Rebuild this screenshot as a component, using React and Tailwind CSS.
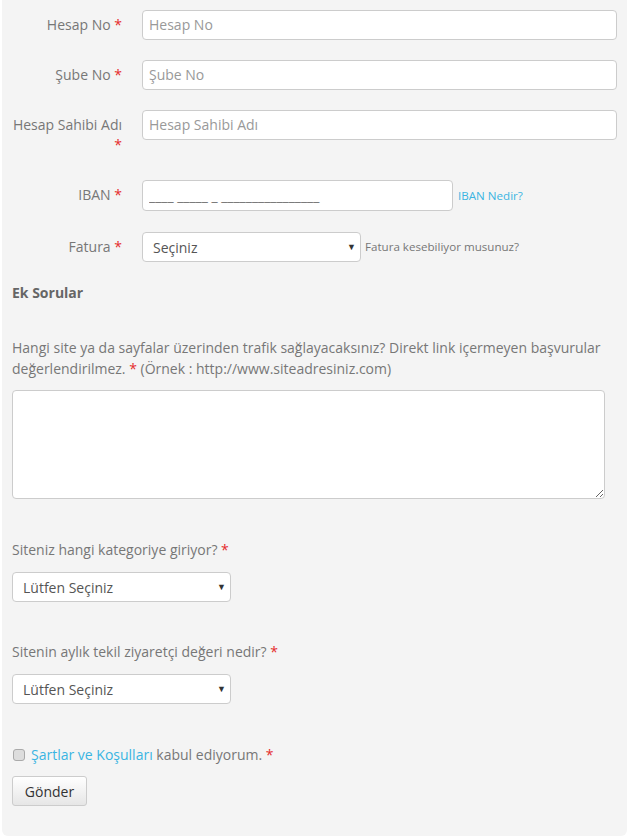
import React from 'react';

const Req = () => <span className="text-[#e52b2b]"> *</span>;

const Arrow = ({ right = 'right-[5px]' }) => (
    <span className={`pointer-events-none absolute top-1/2 -translate-y-1/2 text-[9px] text-[#333] ${right}`}>▼</span>
);

const Row = ({ label, children, className = '' }) => (
    <div className={`flex items-start ${className}`}>
        <label className="w-[110px] shrink-0 pt-[5px] text-right text-[14px] leading-[20px] text-[#777]">
            {label}
            <Req />
        </label>
        <div className="ml-[20px] flex flex-1 items-center">{children}</div>
    </div>
);

export default function App() {
    return (
        <div className="min-h-[837px] bg-white" style={{ fontFamily: '"Open Sans", "Liberation Sans", sans-serif' }}>
            <div className="ml-[2px] rounded-b-[6px] bg-[#f4f4f4] pb-[30px] pl-[10px] pr-[10px] pt-[10px]">
                <Row label="Hesap No">
                    <input placeholder="Hesap No" className="h-[30px] w-full rounded-[4px] border border-[#ccc] bg-white px-[6px] pb-[2px] text-[14px] text-[#555] outline-none placeholder:text-[#999]" />
                </Row>
                <Row label="Şube No" className="mt-[20px]">
                    <input placeholder="Şube No" className="h-[30px] w-full rounded-[4px] border border-[#ccc] bg-white px-[6px] pb-[2px] text-[14px] text-[#555] outline-none placeholder:text-[#999]" />
                </Row>
                <Row label="Hesap Sahibi Adı" className="mt-[20px]">
                    <input placeholder="Hesap Sahibi Adı" className="h-[30px] w-full rounded-[4px] border border-[#ccc] bg-white px-[6px] pb-[2px] text-[14px] text-[#555] outline-none placeholder:text-[#999]" />
                </Row>
                <Row label="IBAN" className="mt-[25px]">
                    <input placeholder="____ _____ _ ________________" className="h-[31px] w-[311px] rounded-[4px] border border-[#ccc] bg-white px-[6px] text-[14px] text-[#555] outline-none placeholder:text-[#777]" />
                    <a className="ml-[5px] text-[11.6px] text-[#3ab4e2]">IBAN Nedir?</a>
                </Row>
                <Row label="Fatura" className="mt-[21px]">
                    <div className="relative w-[219px]">
                        <select className="h-[30px] w-full appearance-none rounded-[4px] border border-[#ccc] bg-white pl-[10px] text-[14px] text-[#555] outline-none">
                            <option>Seçiniz</option>
                        </select>
                        <Arrow />
                    </div>
                    <span className="ml-[4px] text-[11.6px] text-[#777]">Fatura kesebiliyor musunuz?</span>
                </Row>

                <h4 className="mt-[21px] text-[14px] font-bold leading-[20px] text-[#666]">Ek Sorular</h4>

                <p className="mt-[34px] text-[14px] leading-[21px] text-[#777]">
                    Hangi site ya da sayfalar üzerinden trafik sağlayacaksınız? Direkt link içermeyen başvurular değerlendirilmez.
                    <Req /> (Örnek : http://www.siteadresiniz.com)
                </p>
                <textarea className="mt-[11px] block h-[109px] w-[593px] rounded-[4px] border border-[#ccc] bg-white outline-none" />

                <p className="mt-[41px] text-[14px] leading-[20px] text-[#777]">
                    Siteniz hangi kategoriye giriyor?<Req />
                </p>
                <div className="relative mt-[12px] w-[219px]">
                    <select className="h-[30px] w-full appearance-none rounded-[4px] border border-[#ccc] bg-white pl-[10px] text-[14px] text-[#555] outline-none">
                        <option>Lütfen Seçiniz</option>
                    </select>
                    <Arrow />
                </div>

                <p className="mt-[40px] text-[14px] leading-[20px] text-[#777]">
                    Sitenin aylık tekil ziyaretçi değeri nedir?<Req />
                </p>
                <div className="relative mt-[12px] w-[219px]">
                    <select className="h-[30px] w-full appearance-none rounded-[4px] border border-[#ccc] bg-white pl-[10px] text-[14px] text-[#555] outline-none">
                        <option>Lütfen Seçiniz</option>
                    </select>
                    <Arrow />
                </div>

                <div className="mt-[41px] flex items-center text-[14px] leading-[20px] text-[#777]">
                    <span className="ml-[1px] inline-block h-[12px] w-[12px] rounded-[3px] border border-[#aaa] bg-[#ddd]" />
                    <span className="ml-[6px]">
                        <a className="text-[#3ab4e2]">Şartlar ve Koşulları</a> kabul ediyorum.<Req />
                    </span>
                </div>
                <button className="mt-[11px] h-[30px] w-[75px] rounded-[3px] border border-[#ccc] bg-gradient-to-b from-white to-[#e6e6e6] text-[14px] text-[#333]">
                    Gönder
                </button>
            </div>
        </div>
    );
}
